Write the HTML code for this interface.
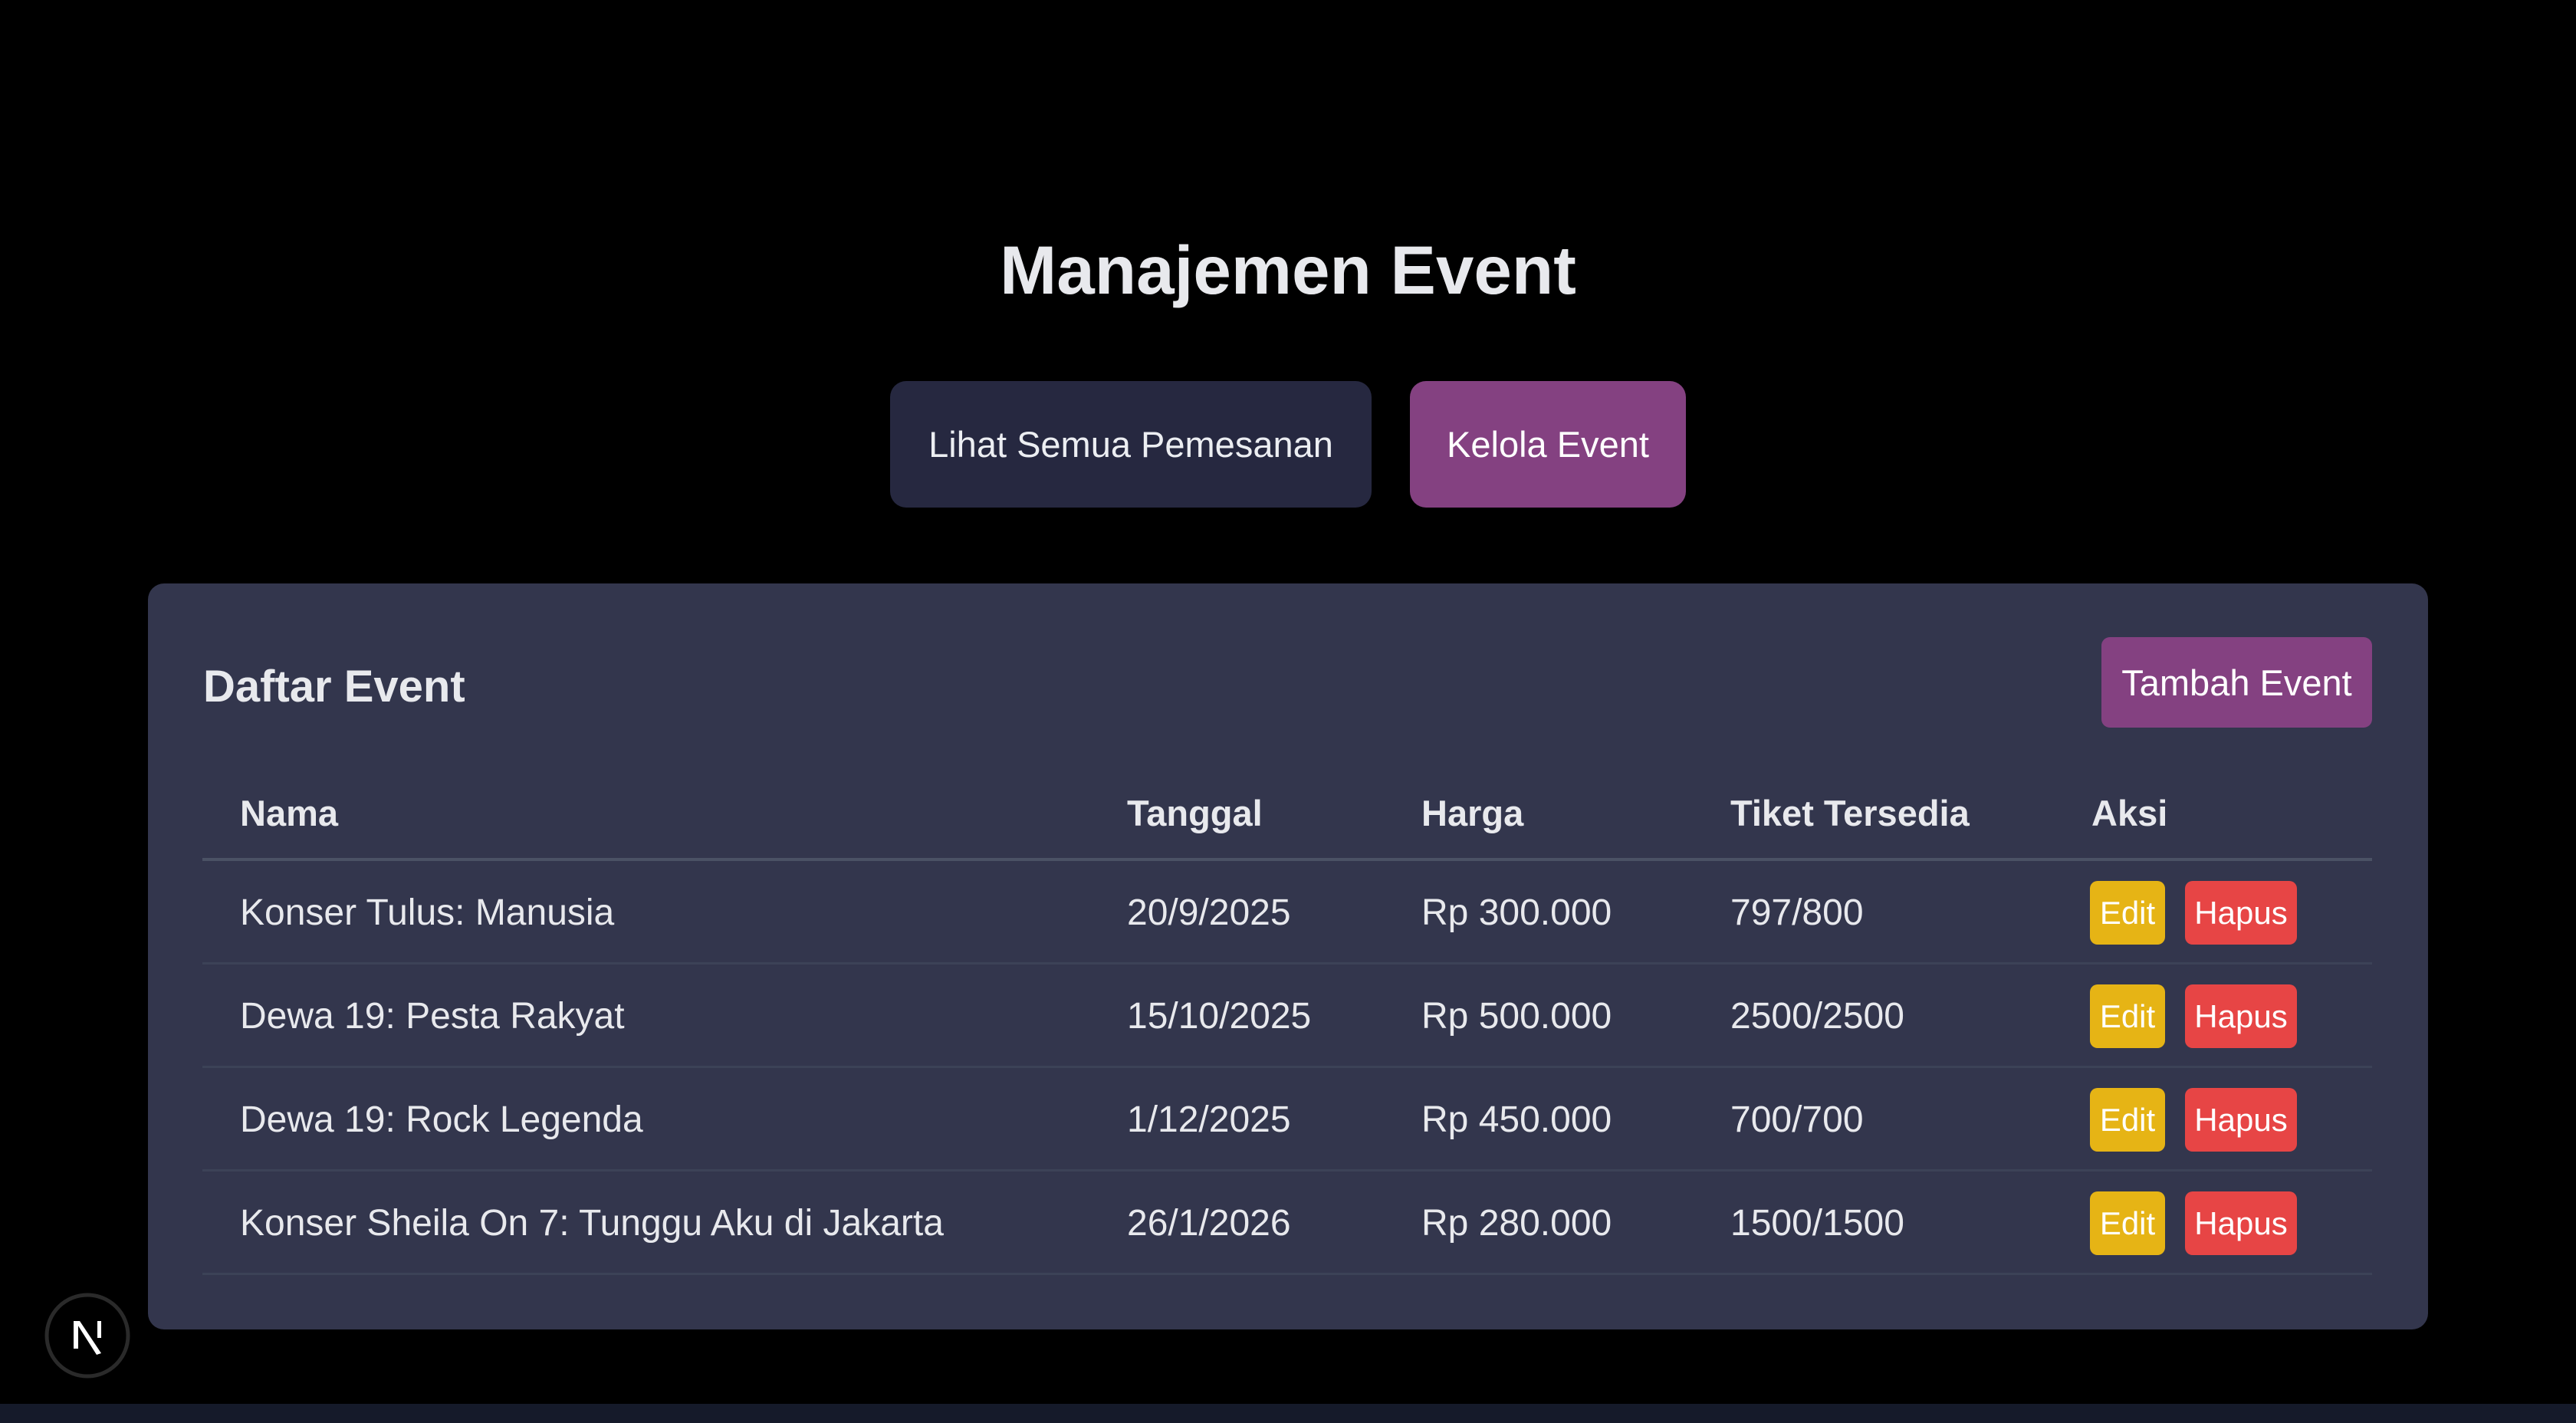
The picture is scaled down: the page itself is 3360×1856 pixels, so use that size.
<!DOCTYPE html>
<html><head><meta charset="utf-8"><style>
*{margin:0;padding:0;box-sizing:border-box}
html,body{width:3360px;height:1856px;background:#000;overflow:hidden;font-family:"Liberation Sans",sans-serif;color:#e8e9ed}
.abs{position:absolute}
h1{position:absolute;left:0;width:3360px;top:292px;text-align:center;font-size:89px;font-weight:bold;line-height:120px;color:#e8e9ed}
.btn{position:absolute;display:flex;align-items:center;justify-content:center;font-size:47px;color:#eceef2}
.card{position:absolute;left:193px;top:761px;width:2974px;height:973px;background:#33364d;border-radius:21px}
.t{position:absolute;font-size:48px;line-height:60px;white-space:nowrap}
.h{font-weight:bold;font-size:47px}
.line{position:absolute;left:264px;width:2830px;height:3px;background:#3c4257}
.e{position:absolute;width:98px;height:83px;background:#e6b415;border-radius:10px;color:#fff;font-size:42px;display:flex;align-items:center;justify-content:center}
.d{position:absolute;width:146px;height:83px;background:#e74545;border-radius:10px;color:#fff;font-size:42px;display:flex;align-items:center;justify-content:center}
</style></head><body>
<h1>Manajemen Event</h1>
<div class="btn" style="left:1161px;top:497px;width:628px;height:165px;background:#262840;border-radius:21px">Lihat Semua Pemesanan</div>
<div class="btn" style="left:1839px;top:497px;width:360px;height:165px;background:#844181;border-radius:21px;color:#fff">Kelola Event</div>
<div class="card"></div>
<div class="t" style="left:265px;top:863px;font-size:58px;line-height:66px;font-weight:bold">Daftar Event</div>
<div class="btn" style="left:2741px;top:831px;width:353px;height:118px;background:#844181;border-radius:11px;font-size:47px;color:#fff">Tambah Event</div>
<div class="t h" style="left:313px;top:1031px">Nama</div>
<div class="t h" style="left:1470px;top:1031px">Tanggal</div>
<div class="t h" style="left:1854px;top:1031px">Harga</div>
<div class="t h" style="left:2257px;top:1031px">Tiket Tersedia</div>
<div class="t h" style="left:2728px;top:1031px">Aksi</div>
<div class="line" style="top:1119px;background:#4b5265;height:4px"></div>
<div class="line" style="top:1255px"></div>
<div class="line" style="top:1390px"></div>
<div class="line" style="top:1525px"></div>
<div class="line" style="top:1660px"></div>

<div class="t" style="left:313px;top:1161px">Konser Tulus: Manusia</div>
<div class="t" style="left:1470px;top:1161px">20/9/2025</div>
<div class="t" style="left:1854px;top:1161px">Rp 300.000</div>
<div class="t" style="left:2257px;top:1161px">797/800</div>
<div class="e" style="left:2726px;top:1149px">Edit</div><div class="d" style="left:2850px;top:1149px">Hapus</div>

<div class="t" style="left:313px;top:1296px">Dewa 19: Pesta Rakyat</div>
<div class="t" style="left:1470px;top:1296px">15/10/2025</div>
<div class="t" style="left:1854px;top:1296px">Rp 500.000</div>
<div class="t" style="left:2257px;top:1296px">2500/2500</div>
<div class="e" style="left:2726px;top:1284px">Edit</div><div class="d" style="left:2850px;top:1284px">Hapus</div>

<div class="t" style="left:313px;top:1431px">Dewa 19: Rock Legenda</div>
<div class="t" style="left:1470px;top:1431px">1/12/2025</div>
<div class="t" style="left:1854px;top:1431px">Rp 450.000</div>
<div class="t" style="left:2257px;top:1431px">700/700</div>
<div class="e" style="left:2726px;top:1419px">Edit</div><div class="d" style="left:2850px;top:1419px">Hapus</div>

<div class="t" style="left:313px;top:1566px">Konser Sheila On 7: Tunggu Aku di Jakarta</div>
<div class="t" style="left:1470px;top:1566px">26/1/2026</div>
<div class="t" style="left:1854px;top:1566px">Rp 280.000</div>
<div class="t" style="left:2257px;top:1566px">1500/1500</div>
<div class="e" style="left:2726px;top:1554px">Edit</div><div class="d" style="left:2850px;top:1554px">Hapus</div>

<svg class="abs" style="left:54px;top:1685px" width="120" height="120" viewBox="0 0 120 120">
<circle cx="60" cy="57" r="53" fill="#000" stroke="#2a2a2a" stroke-width="5"/>
<rect x="42" y="38" width="6" height="36" fill="#fff"/>
<rect x="73" y="38" width="5" height="22" fill="#fff"/>
<path d="M44 38 L50 38 L78 80 L72 82 Z" fill="#fff"/>
</svg>
<div class="abs" style="left:0;top:1831px;width:3360px;height:25px;background:#151a2a"></div>
</body></html>
